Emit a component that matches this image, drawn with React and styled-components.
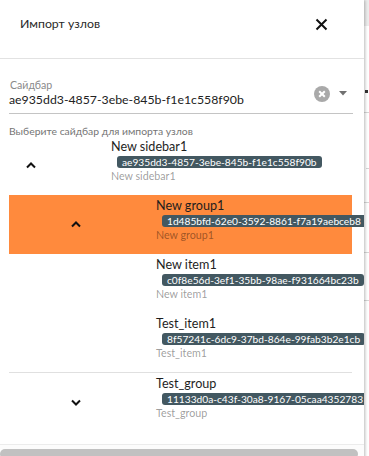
import React from "react";
import styled, { createGlobalStyle } from "styled-components";

const Global = createGlobalStyle`
  html, body { margin: 0; padding: 0; overflow: hidden; background: #fff; }
  body { font-family: "Lato", "Noto Sans", sans-serif; }
  * { box-sizing: border-box; }
`;

const Page = styled.div`
  position: relative;
  width: 369px;
  height: 456px;
  overflow: hidden;
  background: #fff;
`;

const Backdrop = styled.div`
  display: flex;
  flex-direction: column;
`;

const BackRow = styled.div`
  height: ${(p) => p.h}px;
  background: ${(p) => p.bg || "transparent"};
  border-bottom: ${(p) => (p.line ? `1px ${p.line} #d6d6d6` : "none")};
  position: relative;
`;

const BackMark = styled.span`
  position: absolute;
  right: 1px;
  width: 3px;
  height: 3px;
  background: #333;
`;

const Drawer = styled.aside`
  position: absolute;
  left: 0;
  top: 0;
  width: 364px;
  height: 470px;
  background: #fff;
  box-shadow: 1px 0 3px rgba(0, 0, 0, 0.28);
  display: flex;
  flex-direction: column;
`;

const Header = styled.header`
  height: 59px;
  flex-shrink: 0;
  display: flex;
  align-items: flex-start;
  justify-content: space-between;
  padding: 16px 36px 0 20px;
  border-bottom: 1px solid #e2e2e2;
`;

const Title = styled.h2`
  margin: 0;
  font-size: 12.3px;
  line-height: 16px;
  font-weight: 400;
  color: #2a2a2a;
`;

const IconButton = styled.button`
  border: 0;
  background: none;
  padding: 0;
  margin-top: 2px;
  width: 13px;
  height: 13px;
  display: flex;
  cursor: pointer;
`;

const Field = styled.div`
  margin: 20px 11px 0 9px;
`;

const FieldLabel = styled.div`
  font-size: 10.6px;
  line-height: 12px;
  color: #8a8a8a;
  padding-left: 1px;
`;

const FieldInput = styled.div`
  display: flex;
  align-items: center;
  height: 23px;
  border-bottom: 1px solid #c4c4c4;
  padding-bottom: 3px;
`;

const FieldValue = styled.div`
  flex: 1;
  font-size: 12.3px;
  line-height: 16px;
  color: #222;
  margin-top: -2px;
`;

const Adornments = styled.div`
  display: flex;
  align-items: center;
  gap: 9px;
  margin-right: 6px;
  margin-top: -14px;
`;

const Helper = styled.div`
  font-size: 10.4px;
  line-height: 9px;
  color: #757575;
  margin-top: 13px;
`;

const ScrollArea = styled.div`
  overflow: hidden;
  padding-bottom: 12px;
  flex-shrink: 0;
`;

const Tree = styled.ul`
  list-style: none;
  margin: 0 11px 0 9px;
  padding: 0;
  width: 343px;
`;

const Row = styled.li`
  display: flex;
  padding-left: ${(p) => p.level * 45}px;
  background: ${(p) => (p.selected ? "#ff8a3d" : "transparent")};
  border-top: ${(p) => (p.divided ? "1px solid #e0e0e0" : "none")};
  height: ${(p) => (p.divided ? 60 : 59)}px;
`;

const CaretBox = styled.div`
  width: 44px;
  display: flex;
  align-items: center;
  justify-content: center;
  flex-shrink: 0;
`;

const TextCol = styled.div`
  margin-left: 58px;
  padding-top: 3px;
  display: flex;
  flex-direction: column;
  align-items: flex-start;
  white-space: nowrap;
`;

const NodeName = styled.div`
  font-size: 12.6px;
  line-height: 16px;
  color: #1e1e1e;
`;

const Chip = styled.span`
  margin: 1px 0 0 6px;
  height: 12px;
  padding: 0 5px;
  border-radius: 3px;
  background: #435861;
  color: #fff;
  font-size: 10.2px;
  line-height: 12px;
`;

const NodeSub = styled.div`
  margin-top: 1px;
  font-size: 10.7px;
  line-height: 13px;
  color: rgba(0, 0, 0, 0.4);
`;

const ScrollTrack = styled.div`
  height: 16px;
  flex-shrink: 0;
  border-top: 1px solid #ececec;
  background: #fcfcfc;
  padding-top: 4px;
`;

const ScrollThumb = styled.div`
  width: 358px;
  height: 10px;
  border-radius: 5px;
  background: #c1c1c1;
`;

const Caret = ({ down }) => (
  <svg width="10" height="7" viewBox="0 0 10 7">
    <polyline
      points={down ? "1,1.5 5,5.5 9,1.5" : "1,5.5 5,1.5 9,5.5"}
      fill="none"
      stroke="#111"
      strokeWidth="2"
    />
  </svg>
);

const CloseIcon = () => (
  <svg width="13" height="13" viewBox="0 0 13 13">
    <path d="M1.5 1.5 L11.5 11.5 M11.5 1.5 L1.5 11.5" stroke="#111" strokeWidth="2" />
  </svg>
);

const ClearIcon = () => (
  <svg width="16" height="16" viewBox="0 0 16 16">
    <circle cx="8" cy="8" r="8" fill="#a9a9a9" />
    <path d="M5.2 5.2 L10.8 10.8 M10.8 5.2 L5.2 10.8" stroke="#fff" strokeWidth="2" />
  </svg>
);

const ArrowIcon = () => (
  <svg width="8" height="5" viewBox="0 0 8 5">
    <path d="M0 0 L8 0 L4 4.5 Z" fill="#707070" />
  </svg>
);

const nodes = [
  { level: 0, name: "New sidebar1", id: "ae935dd3-4857-3ebe-845b-f1e1c558f90b", caret: "up" },
  { level: 1, name: "New group1", id: "1d485bfd-62e0-3592-8861-f7a19aebceb8", caret: "up", selected: true },
  { level: 1, name: "New item1", id: "c0f8e56d-3ef1-35bb-98ae-f931664bc23b" },
  { level: 1, name: "Test_item1", id: "8f57241c-6dc9-37bd-864e-99fab3b2e1cb" },
  { level: 1, name: "Test_group", id: "11133d0a-c43f-30a8-9167-05caa4352783", caret: "down", divided: true },
];

export default function App() {
  return (
    <Page>
      <Global />
      <Backdrop>
        <BackRow h={26} bg="#ececec" />
        <BackRow h={87} line="solid">
          <BackMark style={{ top: 64 }} />
        </BackRow>
        <BackRow h={56} line="dashed" />
        <BackRow h={34} line="solid" />
        <BackRow h={50} line="solid" />
        <BackRow h={48} line="solid" />
      </Backdrop>
      <Drawer>
        <Header>
          <Title>Импорт узлов</Title>
          <IconButton aria-label="close">
            <CloseIcon />
          </IconButton>
        </Header>
        <Field>
          <FieldLabel>Сайдбар</FieldLabel>
          <FieldInput>
            <FieldValue>ae935dd3-4857-3ebe-845b-f1e1c558f90b</FieldValue>
            <Adornments>
              <ClearIcon />
              <ArrowIcon />
            </Adornments>
          </FieldInput>
          <Helper>Выберите сайдбар для импорта узлов</Helper>
        </Field>
        <ScrollArea>
          <Tree>
            {nodes.map((n) => (
              <Row key={n.id} level={n.level} selected={n.selected} divided={n.divided}>
                <CaretBox>{n.caret && <Caret down={n.caret === "down"} />}</CaretBox>
                <TextCol>
                  <NodeName>{n.name}</NodeName>
                  <Chip>{n.id}</Chip>
                  <NodeSub>{n.name}</NodeSub>
                </TextCol>
              </Row>
            ))}
          </Tree>
        </ScrollArea>
        <ScrollTrack>
          <ScrollThumb />
        </ScrollTrack>
      </Drawer>
    </Page>
  );
}
